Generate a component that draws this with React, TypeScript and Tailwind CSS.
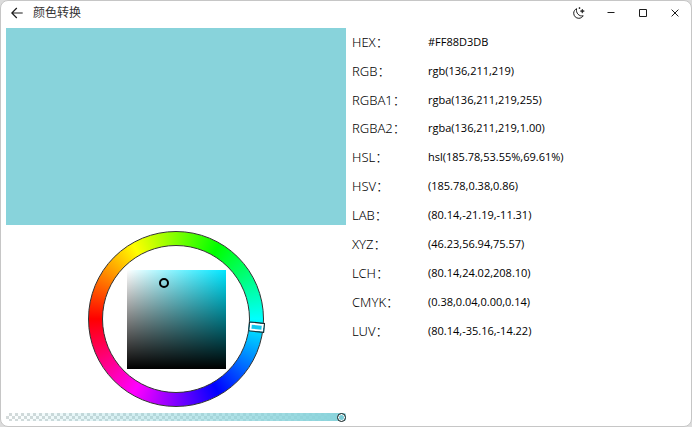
import { useState } from "react";

const HUE = 185.78;
const SATURATION = 0.38;
const VALUE = 0.86;

const formats = [
  { label: "HEX", value: "#FF88D3DB" },
  { label: "RGB", value: "rgb(136,211,219)" },
  { label: "RGBA1", value: "rgba(136,211,219,255)" },
  { label: "RGBA2", value: "rgba(136,211,219,1.00)" },
  { label: "HSL", value: "hsl(185.78,53.55%,69.61%)" },
  { label: "HSV", value: "(185.78,0.38,0.86)" },
  { label: "LAB", value: "(80.14,-21.19,-11.31)" },
  { label: "XYZ", value: "(46.23,56.94,75.57)" },
  { label: "LCH", value: "(80.14,24.02,208.10)" },
  { label: "CMYK", value: "(0.38,0.04,0.00,0.14)" },
  { label: "LUV", value: "(80.14,-35.16,-14.22)" },
];

function TitleBar() {
  return (
    <header className="flex h-[27px] shrink-0 items-center pb-1 pl-2">
      <button type="button" aria-label="返回" className="flex size-4 items-center justify-center">
        <svg viewBox="0 0 12 12" className="size-3" fill="none" stroke="#1c1c1c" strokeWidth="1.2">
          <path d="M11.7 6H.8M5.8 1 .8 6l5 5" />
        </svg>
      </button>
      <h1 className="ml-2 flex-1 text-xs text-[#333]">颜色转换</h1>
      <button type="button" aria-label="深色模式" className="flex h-6 w-8 items-center justify-center">
        <svg viewBox="0 0 12 12" className="size-3" fill="none" stroke="#1c1c1c" strokeWidth="1">
          <path d="M3.600 1.700C1.900 2.500.7 4.200.7 6.200c0 2.900 2.300 5.100 5.100 5.100 1.900 0 3.500-1 4.400-2.500-3.900 1-7.600-2.700-6.600-7.100Z" />
          <path d="M9.300 2.100 9.900 3.500 11.400 4.100 9.900 4.700 9.300 6.200 8.700 4.700 7.200 4.100 8.700 3.500Z" fill="#1c1c1c" strokeWidth=".5" />
          <path d="M6.500.2v1.800M5.600 1.100h1.800" strokeWidth=".8" />
        </svg>
      </button>
      <div className="flex">
        <button type="button" aria-label="最小化" className="flex h-6 w-8 items-center justify-center">
          <svg viewBox="0 0 8 8" className="size-2" stroke="#1c1c1c">
            <path d="M.5 3.500h7" />
          </svg>
        </button>
        <button type="button" aria-label="最大化" className="flex h-6 w-8 items-center justify-center">
          <svg viewBox="0 0 8 8" className="size-2" fill="none" stroke="#1c1c1c">
            <path d="M.5.5h7v7h-7Z" />
          </svg>
        </button>
        <button type="button" aria-label="关闭" className="flex h-6 w-8 items-center justify-center">
          <svg viewBox="0 0 8 8" className="size-2" stroke="#1c1c1c">
            <path d="m.6.6 6.800 6.800m0-6.800-6.800 6.800" />
          </svg>
        </button>
      </div>
    </header>
  );
}

function ColorWheel() {
  return (
    <div className="relative flex size-44 shrink-0 self-center rounded-full border border-[#333] bg-[conic-gradient(from_270deg,#f00,#ff0,#0f0,#0ff,#00f,#f0f,#f00)] p-[13px]">
      <div className="flex flex-1 items-center justify-center rounded-full border border-[#333] bg-white">
        <div className="relative size-[99px] bg-[linear-gradient(to_bottom,transparent,#000),linear-gradient(to_right,#fff,#00e6ff)]">
          <button
            type="button"
            role="slider"
            aria-label="饱和度与明度"
            aria-valuenow={SATURATION * 100}
            className="absolute size-[10px] -translate-1/2 rounded-full border-2 border-black"
            style={{ left: `${SATURATION * 100}%`, top: `${(1 - VALUE) * 100}%` }}
          />
        </div>
      </div>
      {/* The arm turns about the wheel's centre and carries the hue handle at its end. */}
      <div
        className="pointer-events-none absolute inset-0 flex items-center justify-end"
        style={{ transform: `rotate(${HUE - 180}deg)` }}
      >
        <button
          type="button"
          role="slider"
          aria-label="色相"
          aria-valuenow={HUE}
          className="pointer-events-auto -mr-[2px] h-[10px] w-4 border border-[#222] bg-[#10c8ee] shadow-[inset_0_0_0_2px_#fff]"
        />
      </div>
    </div>
  );
}

function AlphaSlider() {
  const [alpha, setAlpha] = useState(255);
  return (
    <input
      type="range"
      aria-label="透明度"
      min={0}
      max={255}
      value={alpha}
      onChange={(event) => setAlpha(Number(event.target.value))}
      className="block h-2 w-full shrink-0 appearance-none rounded-xs bg-[linear-gradient(to_right,transparent,#88d3db),repeating-conic-gradient(#d4dada_0_25%,#fff_0_50%)] bg-[length:100%_100%,6px_6px] [&::-webkit-slider-thumb]:size-[9px] [&::-webkit-slider-thumb]:appearance-none [&::-webkit-slider-thumb]:rounded-full [&::-webkit-slider-thumb]:border [&::-webkit-slider-thumb]:border-[#222] [&::-webkit-slider-thumb]:bg-[#78cbd6] [&::-webkit-slider-thumb]:shadow-[inset_0_0_0_1px_#fff]"
    />
  );
}

function FormatList() {
  return (
    <dl className="grid h-[318px] auto-rows-fr">
      {formats.map(({ label, value }) => (
        <div key={label} className="flex items-center">
          <dt className="w-[76px] text-[13px] font-light">{label}：</dt>
          <dd className="flex-1 pb-px font-['Open_Sans','Noto_Sans_CJK_SC',sans-serif] text-[11px]">{value}</dd>
        </div>
      ))}
    </dl>
  );
}

export default function App() {
  return (
    <div className="h-screen bg-[#dcdcdc]">
      <div
        lang="zh-CN"
        className="flex h-full flex-col rounded-lg border border-[#c6c6c6] bg-white font-['Noto_Sans','Noto_Sans_CJK_SC',sans-serif] text-black"
      >
        <TitleBar />
        <main className="grid flex-1 grid-cols-2">
          <section className="flex flex-col gap-[6px] pb-[5px] pl-[5px]">
            <div className="flex-1 bg-[#88d3db]" />
            <ColorWheel />
            <AlphaSlider />
          </section>
          <section className="pl-[6px]">
            <FormatList />
          </section>
        </main>
      </div>
    </div>
  );
}
